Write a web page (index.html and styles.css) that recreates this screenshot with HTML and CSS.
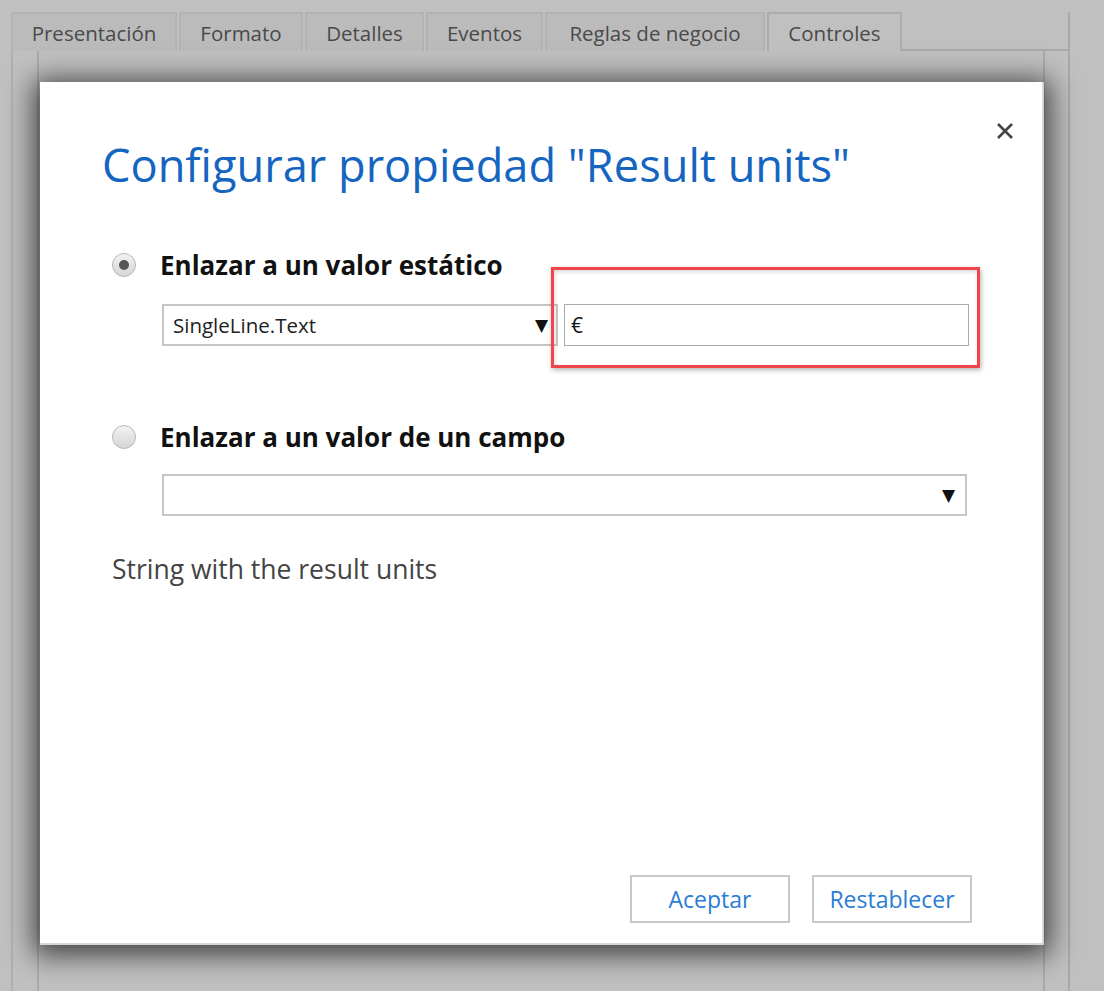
FILE: index.html
```html
<!DOCTYPE html>
<html lang="es">
<head>
<meta charset="utf-8">
<title>Configurar propiedad</title>
<link rel="stylesheet" href="styles.css">
</head>
<body>
<div class="page">
  <div class="tabs">
    <div class="tab t-pres">Presentación</div>
    <div class="tab t-form">Formato</div>
    <div class="tab t-det">Detalles</div>
    <div class="tab t-ev">Eventos</div>
    <div class="tab t-reg">Reglas de negocio</div>
    <div class="tab t-ctl active">Controles</div>
    <div class="tab-fill"></div>
  </div>
  <div class="panel">
    <div class="inner"></div>
  </div>

  <div class="dialog">
    <button class="close" aria-label="Cerrar">
      <svg width="20" height="20" viewBox="0 0 20 20"><path d="M3 3L17 17M17 3L3 17" stroke="#444" stroke-width="2.6" stroke-linecap="butt"/></svg>
    </button>
    <h1 class="title">Configurar propiedad "Result units"</h1>

    <div class="option">
      <span class="radio checked"></span>
      <span class="label">Enlazar a un valor estático</span>
    </div>
    <div class="row">
      <div class="select small">
        <span>SingleLine.Text</span>
        <span class="arrow">▼</span>
      </div>
      <div class="highlight-wrap">
        <div class="input">€</div>
        <div class="highlight"></div>
      </div>
    </div>

    <div class="option second">
      <span class="radio"></span>
      <span class="label">Enlazar a un valor de un campo</span>
    </div>
    <div class="row">
      <div class="select wide">
        <span></span>
        <span class="arrow">▼</span>
      </div>
    </div>

    <p class="desc">String with the result units</p>

    <div class="buttons">
      <button class="btn">Aceptar</button>
      <button class="btn">Restablecer</button>
    </div>
  </div>
</div>
</body>
</html>
```

FILE: styles.css
```css
* { box-sizing: border-box; }
html, body {
  margin: 0;
  padding: 0;
  background: #c0c0c0;
  font-family: "Open Sans", "Noto Sans", sans-serif;
}
.page {
  position: relative;
  width: 1104px;
  height: 991px;
  overflow: hidden;
  padding: 12px 0 0 11px;
}
.tabs {
  display: flex;
  gap: 2px;
  height: 39px;
  width: 1059px;
}
.tab {
  height: 39px;
  padding: 0;
  display: flex;
  align-items: center;
  justify-content: center;
  font-size: 20.5px;
  color: #4a4a4a;
  background: #bbbbbb;
  border: 2px solid #b3b3b3;
  border-bottom: none;
  white-space: nowrap;
}
.t-pres { width: 166px; }
.t-form { width: 124px; }
.t-det { width: 119px; }
.t-ev { width: 117px; }
.t-reg { width: 220px; }
.t-ctl { width: 135px; }
.tab.active {
  background: #c0c0c0;
  border-color: #acacac;
}
.tab-fill {
  flex: 1;
  border-bottom: 2px solid #a9a9a9;
  border-right: 2px solid #a9a9a9;
  margin-left: -2px;
}
.panel {
  width: 1059px;
  height: 960px;
  border-left: 2px solid #b0b0b0;
  border-right: 2px solid #a9a9a9;
  padding: 0 0 0 24px;
}
.inner {
  width: 1008px;
  height: 100%;
  border-left: 2px solid #aaaaaa;
  border-right: 2px solid #aaaaaa;
}
.dialog {
  position: absolute;
  left: 40px;
  top: 82px;
  width: 1004px;
  height: 863px;
  background: #fff;
  box-shadow: 0 4px 26px 6px rgba(0, 0, 0, 0.66);
  border-right: 2px solid #d8d8d8;
  border-bottom: 2px solid #d8d8d8;
  padding: 50px 0 0 62px;
}
.close {
  position: absolute;
  right: 27px;
  top: 39px;
  width: 20px;
  height: 20px;
  padding: 0;
  border: none;
  background: none;
}
.title {
  margin: 0;
  font-weight: 400;
  font-size: 45.2px;
  line-height: 66px;
  color: #1565c0;
}
.option {
  display: flex;
  align-items: center;
  gap: 24px;
  margin-top: 49px;
  margin-left: 10px;
  height: 36px;
}
.option.second { margin-top: 73px; }
.radio {
  width: 24px;
  height: 24px;
  border-radius: 50%;
  border: 1px solid #b7b7b7;
  background: linear-gradient(#f2f2f2, #d6d6d6);
  display: flex;
  align-items: center;
  justify-content: center;
}
.radio.checked::after {
  content: "";
  width: 10px;
  height: 10px;
  border-radius: 50%;
  background: #555;
}
.label {
  font-weight: 700;
  font-size: 26px;
  color: #111;
}
.row {
  display: flex;
  align-items: center;
  margin-left: 60px;
  margin-top: 21px;
}
.select {
  height: 42px;
  border: 2px solid #c6c6c6;
  display: flex;
  align-items: center;
  justify-content: space-between;
  padding: 0 8px 0 9px;
  font-size: 20.5px;
  color: #222;
}
.select.small { width: 396px; }
.select.wide { width: 805px; margin-top: -2px; padding-right: 10px; }
.arrow {
  font-size: 17px;
  color: #111;
  font-family: "DejaVu Sans", sans-serif;
}
.highlight-wrap {
  position: relative;
  margin-left: 6px;
}
.input {
  width: 405px;
  height: 42px;
  border: 1px solid #aaaaaa;
  padding: 0 6px;
  display: flex;
  align-items: center;
  font-size: 21px;
  color: #111;
}
.highlight {
  position: absolute;
  left: -13px;
  top: -37px;
  width: 429px;
  height: 101px;
  border: 3px solid #f0454a;
  box-shadow: 1px 2px 5px rgba(0, 0, 0, 0.3), inset 1px 2px 4px rgba(0, 0, 0, 0.15);
}
.desc {
  margin: 35px 0 0 10px;
  font-size: 26.5px;
  color: #444;
}
.buttons {
  position: absolute;
  right: 70px;
  bottom: 20px;
  display: flex;
  gap: 22px;
}
.btn {
  height: 48px;
  width: 160px;
  border: 2px solid #c8c8c8;
  background: #fff;
  color: #2b7cd3;
  font-family: "Open Sans", "Noto Sans", sans-serif;
  font-size: 23px;
  padding: 0;
}
```
